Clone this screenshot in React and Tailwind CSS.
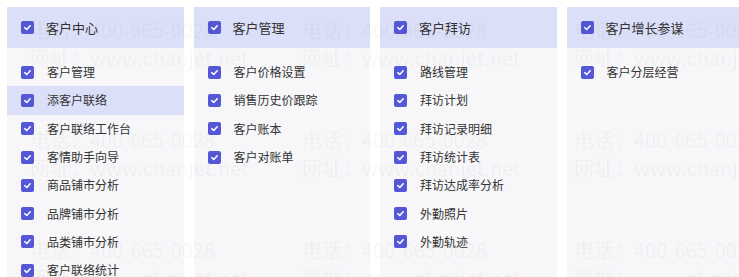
import React from "react";

const columns = [
  { title: "客户中心", items: ["客户管理", "添客户联络", "客户联络工作台", "客情助手向导", "商品铺市分析", "品牌铺市分析", "品类铺市分析", "客户联络统计"], hover: 1 },
  { title: "客户管理", items: ["客户价格设置", "销售历史价跟踪", "客户账本", "客户对账单"] },
  { title: "客户拜访", items: ["路线管理", "拜访计划", "拜访记录明细", "拜访统计表", "拜访达成率分析", "外勤照片", "外勤轨迹"] },
  { title: "客户增长参谋", items: ["客户分层经营"] },
];

function Check() {
  return (
    <span className="flex h-[13px] w-[13px] shrink-0 items-center justify-center rounded-[2px] bg-[#5457d6]">
      <svg width="9" height="9" viewBox="0 0 10 10" fill="none">
        <path d="M2 5.2 L4.2 7.2 L8 3" stroke="white" strokeWidth="1.7" strokeLinecap="round" strokeLinejoin="round" />
      </svg>
    </span>
  );
}

export default function App() {
  const tiles = [];
  for (let j = 0; j < 3; j++) {
    for (let i = 0; i < 3; i++) {
      tiles.push(
        <div
          key={`${i}-${j}`}
          className="absolute whitespace-nowrap text-[20px] leading-[28px] text-[rgba(0,0,0,0.05)]"
          style={{ left: 30 + 272 * i, top: 16 + 110 * j }}
        >
          <div>电话：400-665-0028</div>
          <div>网址：www.chanjet.net</div>
        </div>
      );
    }
  }
  return (
    <div
      className="relative h-[277px] w-[739px] overflow-hidden bg-white pl-[7px] pt-[7px]"
      style={{ fontFamily: '"Noto Sans CJK SC", "Noto Sans", sans-serif' }}
    >
      <div className="flex gap-[10px]">
        {columns.map((col, ci) => (
          <div key={ci} className="flex h-[270px] w-[176.5px] shrink-0 flex-col overflow-hidden bg-[#f7f7f9]">
            <div className="flex h-[41px] shrink-0 items-center gap-[12px] bg-[#dcdff8] pl-[14px]">
              <Check />
              <span className="text-[13px] text-[#333]">{col.title}</span>
            </div>
            <div className="shrink-0 pt-[10px]">
              {col.items.map((it, ii) => (
                <div
                  key={ii}
                  className={`flex h-[28.3px] items-center gap-[13px] pl-[14px] ${col.hover === ii ? "bg-[#dcdff8]" : ""}`}
                >
                  <Check />
                  <span className="text-[12px] text-[#333]">{it}</span>
                </div>
              ))}
            </div>
          </div>
        ))}
      </div>
      <div className="pointer-events-none absolute inset-0">{tiles}</div>
    </div>
  );
}
